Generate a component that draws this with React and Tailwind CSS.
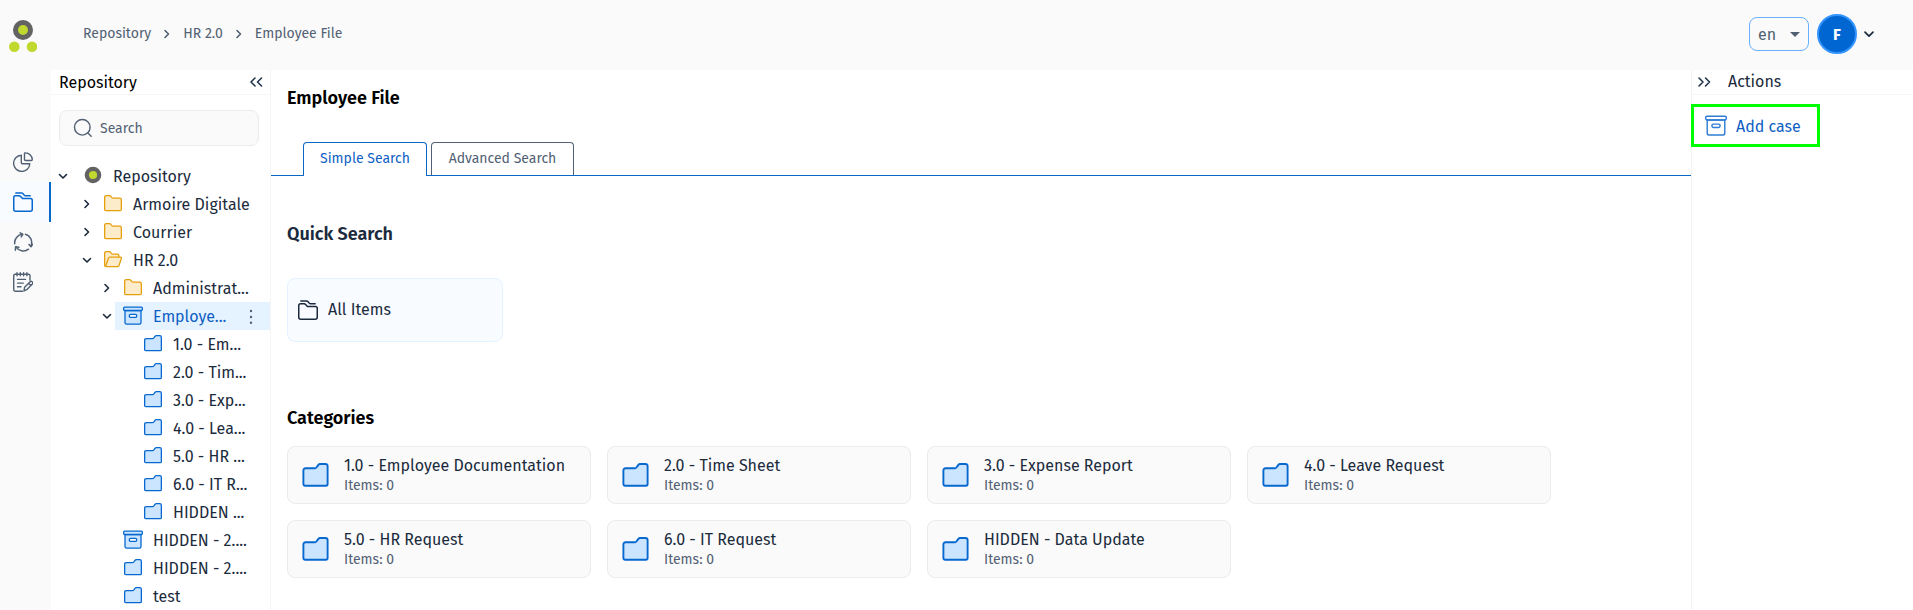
import React from "react";

const chevronPaths = {
  right: "M6 4.5 9.5 8 6 11.5",
  down: "M4.5 6.5 8 10l3.5-3.5",
};

function Chevron({ direction = "right", className = "" }) {
  return (
    <svg viewBox="0 0 16 16" fill="none" stroke="currentColor" strokeWidth="1.6" strokeLinecap="round" strokeLinejoin="round" className={`size-4 shrink-0 ${className}`} aria-hidden="true">
      <path d={chevronPaths[direction]} />
    </svg>
  );
}

function DoubleChevron({ flip = false }) {
  return (
    <svg viewBox="0 0 16 16" fill="none" stroke="currentColor" strokeWidth="1.6" strokeLinecap="round" strokeLinejoin="round" className="size-4" aria-hidden="true">
      {flip ? <path d="m3 4 4 4-4 4M9.500 4l4 4-4 4" /> : <path d="m7 4-4 4 4 4M13.500 4l-4 4 4 4" />}
    </svg>
  );
}

function Logo() {
  return (
    <svg viewBox="0 0 28 32" className="h-8 w-7" aria-hidden="true">
      <circle cx="14" cy="10" r="7.500" fill="#c1d82f" stroke="#636363" strokeWidth="5" />
      <circle cx="5.300" cy="26.700" r="5.300" fill="#c1d82f" />
      <circle cx="23" cy="26.700" r="5.300" fill="#c1d82f" />
    </svg>
  );
}

function RootIcon() {
  return (
    <svg viewBox="0 0 24 24" className="size-6 shrink-0" aria-hidden="true">
      <circle cx="12" cy="11" r="6.200" fill="#c1d82f" stroke="#636363" strokeWidth="4.200" />
    </svg>
  );
}

function FolderIcon() {
  return (
    <svg viewBox="0 0 20 20" fill="#fdecca" stroke="#e5a00d" strokeWidth="1.300" strokeLinejoin="round" className="size-5 shrink-0" aria-hidden="true">
      <path d="M1.650 15.500V3.300q0-1.650 1.650-1.650h3.200q.9 0 1.400.7l1 1.300q.4.500 1 .5h6.800q1.650 0 1.650 1.650v9.700q0 1.150-1.150 1.150H2.800q-1.150 0-1.150-1.150Z" />
    </svg>
  );
}

function FolderOpenIcon() {
  return (
    <svg viewBox="0 0 20 20" fill="#fdecca" stroke="#e5a00d" strokeWidth="1.300" strokeLinejoin="round" className="size-5 shrink-0" aria-hidden="true">
      <path d="M3 16.650q-1.350 0-1.350-1.350V3.300q0-1.650 1.650-1.650h2.900q.9 0 1.400.7l.9 1.200q.4.500 1 .5h4.800q1.500 0 1.500 1.500v2" />
      <path d="M3.800 16.650q-1.300 0-.9-1.200l2.500-7.200q.4-1.100 1.500-1.100h10.500q1.400 0 1 1.200l-2.400 7.200q-.4 1.100-1.500 1.100Z" />
    </svg>
  );
}

function CategoryIcon({ large = false }) {
  return (
    <svg viewBox={large ? "0 -.4 20 20" : "0 0 20 20"} fill="#cbe4ff" stroke="#0768d0" strokeWidth="1.300" strokeLinejoin="round" className={large ? "size-[29px] shrink-0" : "size-5 shrink-0"} aria-hidden="true">
      <path d="M1.650 15.500V6.200q0-1.600 1.600-1.600h6.400q.6 0 1-.5l1.300-1.800q.5-.65 1.300-.65h3.500q1.600 0 1.600 1.600v12.200q0 1.200-1.200 1.200H2.850q-1.200 0-1.200-1.200Z" />
    </svg>
  );
}

function ArchiveIcon({ filled = true }) {
  return (
    <svg viewBox="0 0 20 20" fill={filled ? "#cbe4ff" : "none"} stroke={filled ? "#0768d0" : "#2f7dd6"} strokeWidth="1.300" strokeLinejoin="round" className={filled ? "size-5 shrink-0" : "size-[22px] shrink-0"} aria-hidden="true">
      <path d="M2 4.500v12q0 1.650 1.650 1.650h12.700q1.650 0 1.650-1.650v-12Z" />
      <rect x=".65" y="1.100" width="18.700" height="3.400" rx="1" />
      <rect x="6.300" y="8.300" width="7.400" height="3" rx="1.200" fill={filled ? "#fff" : "none"} />
    </svg>
  );
}

function FoldersIcon() {
  return (
    <svg viewBox="0 0 20 20" fill="none" stroke="currentColor" strokeWidth="1.500" strokeLinejoin="round" className="size-5 shrink-0" aria-hidden="true">
      <path d="M.75 17.200V5.500q0-1.800 1.800-1.800h3.500q1 0 1.600.7l1.300 1.500q.5.600 1.300.6h7.200q1.800 0 1.800 1.800v8.900q0 2-2 2H2.750q-2 0-2-2Z" />
      <path d="M2.300.9h6.200q1 0 1.600.8l1.100 1.400q.5.700 1.300.7h5.200" />
    </svg>
  );
}

function PieIcon() {
  return (
    <svg viewBox="0 0 20 20" fill="none" stroke="currentColor" strokeWidth="1.400" strokeLinecap="round" strokeLinejoin="round" className="size-5" aria-hidden="true">
      <path d="M8.300 3.200a8.100 8.100 0 1 0 8.500 8.500H9.300q-1 0-1-1Z" />
      <path d="M11.500 1.600q0-.9.900-.8a7.300 7.300 0 0 1 6.900 6.700q0 1-.9 1h-5.900q-1 0-1-1Z" />
    </svg>
  );
}

function CycleIcon() {
  return (
    <svg viewBox="0 0 20 20" fill="none" stroke="currentColor" strokeWidth="1.500" strokeLinecap="round" strokeLinejoin="round" className="size-5" aria-hidden="true">
      <path d="M1.700 11.700A8.500 8.500 0 0 1 9.300 2.300M12.500 2.300a8.500 8.500 0 0 1 5.600 11.200M15.500 17.200a8.500 8.500 0 0 1-12-1.600" />
      <path d="m7.200.8 2.600 1.500-1.600 2.600M16 12.600l2 2.200 1.500-2.500M2.400 18.300l.2-3.500 3.200.5" />
    </svg>
  );
}

function NotesIcon() {
  return (
    <svg viewBox="0 0 20 20" fill="none" stroke="currentColor" strokeWidth="1.400" strokeLinecap="round" strokeLinejoin="round" className="size-5" aria-hidden="true">
      <path d="M9.500 19.200H2.700q-2 0-2-2V3.700q0-1.500 1.500-1.500h13.300q1.500 0 1.500 1.500v4.500M4 .7v3M7.300.7v3M10.600.7v3M13.900.7v3" />
      <path d="M4.500 7.400h8M4.500 11.100h5.800M4.500 14.800h3.500" />
      <path d="m11 18.900.6-3.600 5.600-5.600q.9-.8 1.800 0l.4.400q.8.900 0 1.800l-5.500 5.700ZM15.600 11.300l2.300 2.300" />
    </svg>
  );
}

function SearchIcon() {
  return (
    <svg viewBox="0 0 20 20" fill="none" stroke="currentColor" strokeWidth="1.400" strokeLinecap="round" className="size-5 shrink-0" aria-hidden="true">
      <circle cx="9.300" cy="9.300" r="7.800" />
      <path d="m14.900 14.900 3.300 3.300" />
    </svg>
  );
}

const railItems = [
  { label: "Dashboard", Icon: PieIcon },
  { label: "Repository", Icon: FoldersIcon, active: true },
  { label: "Workflows", Icon: CycleIcon },
  { label: "Forms", Icon: NotesIcon },
];

const indents = ["pl-1", "pl-7", "pl-12", "pl-[68px]"];

const tree = [
  { level: 0, label: "Repository", icon: <RootIcon />, arrow: "down" },
  { level: 1, label: "Armoire Digitale", icon: <FolderIcon />, arrow: "right" },
  { level: 1, label: "Courrier", icon: <FolderIcon />, arrow: "right" },
  { level: 1, label: "HR 2.0", icon: <FolderOpenIcon />, arrow: "down" },
  { level: 2, label: "Administrat...", icon: <FolderIcon />, arrow: "right" },
  { level: 2, label: "Employe...", icon: <ArchiveIcon />, arrow: "down", selected: true },
  { level: 3, label: "1.0 - Em...", icon: <CategoryIcon /> },
  { level: 3, label: "2.0 - Tim...", icon: <CategoryIcon /> },
  { level: 3, label: "3.0 - Exp...", icon: <CategoryIcon /> },
  { level: 3, label: "4.0 - Lea...", icon: <CategoryIcon /> },
  { level: 3, label: "5.0 - HR ...", icon: <CategoryIcon /> },
  { level: 3, label: "6.0 - IT R...", icon: <CategoryIcon /> },
  { level: 3, label: "HIDDEN ...", icon: <CategoryIcon /> },
  { level: 2, label: "HIDDEN - 2....", icon: <ArchiveIcon /> },
  { level: 2, label: "HIDDEN - 2....", icon: <CategoryIcon /> },
  { level: 2, label: "test", icon: <CategoryIcon /> },
];

const categories = [
  "1.0 - Employee Documentation",
  "2.0 - Time Sheet",
  "3.0 - Expense Report",
  "4.0 - Leave Request",
  "5.0 - HR Request",
  "6.0 - IT Request",
  "HIDDEN - Data Update",
];

function Header() {
  return (
    <header className="flex h-[70px] items-center justify-between pr-9 pb-0.5 pl-8">
      <nav aria-label="Breadcrumb" className="flex items-center gap-2 text-sm text-[#516173]">
        <a href="#repository">Repository</a>
        <Chevron />
        <a href="#hr">HR 2.0</a>
        <Chevron />
        <a href="#employee-file">Employee File</a>
      </nav>
      <div className="flex items-center">
        <div className="relative mr-2">
          <select aria-label="Language" defaultValue="en" className="h-[34px] w-[60px] appearance-none rounded-lg border border-[#66b0ff] bg-[#fafafa] pt-0.5 pl-2 text-base text-[#516173]">
            <option value="en">en</option>
          </select>
          <svg viewBox="0 0 10 5" className="pointer-events-none absolute top-[15px] right-[9px] h-[5px] w-[10px] fill-[#516173]" aria-hidden="true">
            <path d="M0 0h10L5 5Z" />
          </svg>
        </div>
        <button type="button" aria-label="Account" className="flex items-center gap-1 text-[#1b2b3d]">
          <span className="flex size-10 items-center justify-center rounded-full border-2 border-[#3394ff] bg-[#0066d1] pt-0.5 text-base font-bold text-white">F</span>
          <svg viewBox="0 0 16 16" fill="none" stroke="currentColor" strokeWidth="1.700" strokeLinecap="round" strokeLinejoin="round" className="size-4" aria-hidden="true">
            <path d="M4 6.200 8 10.200l4-4" />
          </svg>
        </button>
      </div>
    </header>
  );
}

function Sidebar() {
  return (
    <aside className="w-[220px] shrink-0 border-r border-[#f5f5f5] bg-white">
      <div className="flex h-[25px] items-center justify-between border-b border-[#f5f5f5] pr-[6px] pl-2">
        <h2 className="pt-0.5 text-base leading-6 text-black">Repository</h2>
        <button type="button" aria-label="Collapse" className="text-[#22364b]"><DoubleChevron /></button>
      </div>
      <label className="mt-[15px] mr-[11px] ml-2 flex h-9 items-center gap-[7px] rounded-lg border border-[#ebebeb] bg-[#fafafa] px-[13px] text-[#516173]">
        <SearchIcon />
        <input type="search" placeholder="Search" aria-label="Search" className="w-full min-w-0 bg-transparent pt-0.5 text-sm outline-none placeholder:text-[#516173]" />
      </label>
      <ul className="mt-4">
        {tree.map((node, index) => (
          <li key={index} className={`flex h-7 items-stretch ${indents[node.level]}`}>
            <span className="flex w-4 shrink-0 items-center text-[#1b2b3d]">
              {node.arrow && <Chevron direction={node.arrow} />}
            </span>
            <a
              href="#node"
              className={`flex min-w-0 flex-1 items-center text-base whitespace-nowrap ${node.level === 0 ? "gap-2 pl-[10px]" : "gap-[10px] pl-2"} ${node.selected ? "bg-[#e5f2ff] text-[#0f5fc4]" : "text-[#1b2b3d]"}`}
            >
              {node.icon}
              <span className="pt-0.5">{node.label}</span>
              {node.selected && (
                <svg viewBox="0 0 4 16" className="mr-[17px] ml-auto h-4 w-1 fill-[#516173]" aria-hidden="true">
                  <circle cx="2" cy="3" r="1.200" />
                  <circle cx="2" cy="9" r="1.200" />
                  <circle cx="2" cy="14.800" r="1.200" />
                </svg>
              )}
            </a>
          </li>
        ))}
      </ul>
    </aside>
  );
}

function Content() {
  return (
    <main className="min-w-0 flex-1 bg-white">
      <h1 className="px-4 pt-4 text-lg leading-6 font-semibold text-black">Employee File</h1>
      <div role="tablist" className="mt-8 flex h-[34px] gap-1 border-b border-[#0768c8] pl-8">
        <button type="button" role="tab" aria-selected="true" className="-mb-px h-[34px] w-[124px] rounded-t border border-b-0 border-[#0768c8] bg-white pb-0.5 text-sm text-[#0f5fc4]">Simple Search</button>
        <button type="button" role="tab" aria-selected="false" className="h-[33px] w-[143px] rounded-t border border-b-0 border-[#516173] bg-white pb-px text-sm text-[#516173]">Advanced Search</button>
      </div>
      <div className="px-4">
        <h2 className="mt-[46px] text-lg leading-6 font-semibold text-[#1b2b3d]">Quick Search</h2>
        <button type="button" className="mt-8 flex h-16 w-[216px] items-center gap-[10px] rounded-lg border border-[#e5f2ff] bg-[#f8fbff] px-[10px] text-base text-[#1b2b3d]">
          <FoldersIcon />
          All Items
        </button>
        <h2 className="mt-16 text-lg leading-6 font-semibold text-black">Categories</h2>
        <div className="mt-4 flex flex-wrap gap-4">
          {categories.map((name) => (
            <a key={name} href="#category" className="flex h-[58px] w-[304px] items-center gap-[14px] rounded-lg border border-[#ebebeb] bg-[#fafafa] px-[13px]">
              <CategoryIcon large />
              <span className="flex flex-col pt-0.5">
                <span className="text-base leading-5 text-[#1b2b3d]">{name}</span>
                <span className="text-sm leading-5 text-[#516173]">Items: 0</span>
              </span>
            </a>
          ))}
        </div>
      </div>
    </main>
  );
}

function Actions() {
  return (
    <aside className="w-[222px] shrink-0 border-l border-[#f3f3f4] bg-white">
      <div className="flex h-[25px] items-center gap-4 border-b border-[#f5f5f5] pl-1 text-[#22364b]">
        <button type="button" aria-label="Collapse actions"><DoubleChevron flip /></button>
        <h2 className="text-base text-[#1b2b3d]">Actions</h2>
      </div>
      <button type="button" className="mt-[9px] -ml-px flex h-[43px] w-[129px] items-center gap-[9px] border-[3px] border-[#00ff00] pl-[11px] text-base text-[#0f5fc4]">
        <ArchiveIcon filled={false} />
        <span className="pt-0.5">Add case</span>
      </button>
    </aside>
  );
}

export default function App() {
  return (
    <div className="flex min-h-screen bg-[#fafafa] font-['Fira_Sans','Noto_Sans',sans-serif]">
      <nav aria-label="Main" className="flex w-[51px] shrink-0 flex-col">
        <a href="#home" aria-label="Home" className="mt-5 mb-[90px] ml-[9px]"><Logo /></a>
        {railItems.map(({ label, Icon, active }) => (
          <a
            key={label}
            href="#section"
            aria-label={label}
            className={`flex h-10 items-center border-r-2 pl-[13px] ${active ? "border-[#0768c8] bg-[#f8fbff] text-[#0768d0]" : "border-transparent text-[#516173]"}`}
          >
            <Icon />
          </a>
        ))}
      </nav>
      <div className="flex min-w-0 flex-1 flex-col">
        <Header />
        <div className="flex flex-1">
          <Sidebar />
          <Content />
          <Actions />
        </div>
      </div>
    </div>
  );
}
